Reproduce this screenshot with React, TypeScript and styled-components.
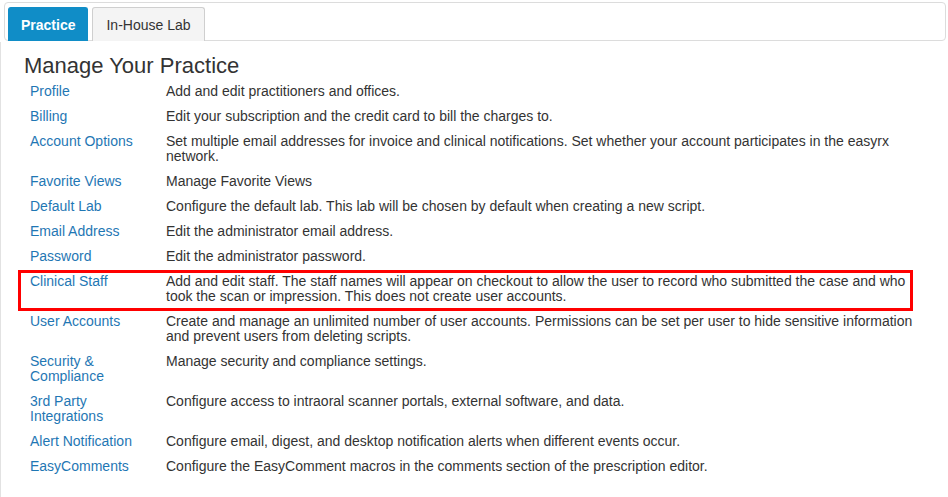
import React from "react";
import styled, { createGlobalStyle } from "styled-components";

const Global = createGlobalStyle`
  html, body { margin: 0; padding: 0; background: #fff; }
  body { font-family: "Liberation Sans", Arial, Helvetica, sans-serif; font-size: 14px; color: #333; }
`;

const Page = styled.div`
  width: 948px;
  height: 497px;
  padding-top: 2px;
  box-sizing: border-box;
  overflow: hidden;
`;

const TabBar = styled.div`
  margin: 0 2px 0 4px;
  height: 39px;
  box-sizing: border-box;
  border: 1px solid #dcdcdc;
  border-radius: 4px;
  padding: 4px 3px 0;
  display: flex;
  align-items: flex-end;
  gap: 4px;
`;

const Tab = styled.div<{ $active?: boolean }>`
  height: 34px;
  margin-bottom: -1px;
  box-sizing: border-box;
  padding: 0 ${(p) => (p.$active ? "12px" : "13px")};
  display: flex;
  align-items: center;
  border: 1px solid ${(p) => (p.$active ? "#108dc7" : "#cfcfcf")};
  border-bottom: none;
  border-radius: 3px 3px 0 0;
  background: ${(p) => (p.$active ? "#108dc7" : "#f4f4f4")};
  color: ${(p) => (p.$active ? "#fff" : "#333")};
  font-weight: ${(p) => (p.$active ? 700 : 400)};
  font-size: 14px;
`;

const Content = styled.div`
  border-left: 1px solid #e2e2e2;
  margin-top: 1px;
  height: 460px;
  padding: 11px 30px 0 23px;
`;

const Title = styled.h1`
  margin: 0;
  font-size: 22px;
  font-weight: 400;
  line-height: 26px;
  color: #333;
`;

const List = styled.div`
  display: flex;
  flex-direction: column;
`;

const Row = styled.div<{ $highlight?: boolean }>`
  position: relative;
  display: grid;
  grid-template-columns: 136px 1fr;
  padding: 5px 0 5px 6px;
  line-height: 15px;
  &::after {
    content: "";
    display: ${(p) => (p.$highlight ? "block" : "none")};
    position: absolute;
    left: -6px;
    right: 5px;
    top: 1px;
    bottom: -2px;
    border: 3px solid #f00;
    pointer-events: none;
  }
`;

const Link = styled.a`
  color: #1f77b4;
  text-decoration: none;
  padding-right: 8px;
`;

const Desc = styled.div`
  color: #333;
`;

const rows: { name: string; desc: string; hl?: boolean }[] = [
  { name: "Profile", desc: "Add and edit practitioners and offices." },
  { name: "Billing", desc: "Edit your subscription and the credit card to bill the charges to." },
  {
    name: "Account Options",
    desc: "Set multiple email addresses for invoice and clinical notifications. Set whether your account participates in the easyrx network.",
  },
  { name: "Favorite Views", desc: "Manage Favorite Views" },
  { name: "Default Lab", desc: "Configure the default lab. This lab will be chosen by default when creating a new script." },
  { name: "Email Address", desc: "Edit the administrator email address." },
  { name: "Password", desc: "Edit the administrator password." },
  {
    name: "Clinical Staff",
    desc: "Add and edit staff. The staff names will appear on checkout to allow the user to record who submitted the case and who took the scan or impression. This does not create user accounts.",
    hl: true,
  },
  {
    name: "User Accounts",
    desc: "Create and manage an unlimited number of user accounts. Permissions can be set per user to hide sensitive information and prevent users from deleting scripts.",
  },
  { name: "Security & Compliance", desc: "Manage security and compliance settings." },
  { name: "3rd Party Integrations", desc: "Configure access to intraoral scanner portals, external software, and data." },
  { name: "Alert Notification", desc: "Configure email, digest, and desktop notification alerts when different events occur." },
  { name: "EasyComments", desc: "Configure the EasyComment macros in the comments section of the prescription editor." },
];

export default function App() {
  return (
    <>
      <Global />
      <Page>
        <TabBar>
          <Tab $active>Practice</Tab>
          <Tab>In-House Lab</Tab>
        </TabBar>
        <Content>
          <Title>Manage Your Practice</Title>
          <List>
            {rows.map((r) => (
              <Row key={r.name} $highlight={r.hl}>
                <Link href="#">{r.name}</Link>
                <Desc>{r.desc}</Desc>
              </Row>
            ))}
          </List>
        </Content>
      </Page>
    </>
  );
}
